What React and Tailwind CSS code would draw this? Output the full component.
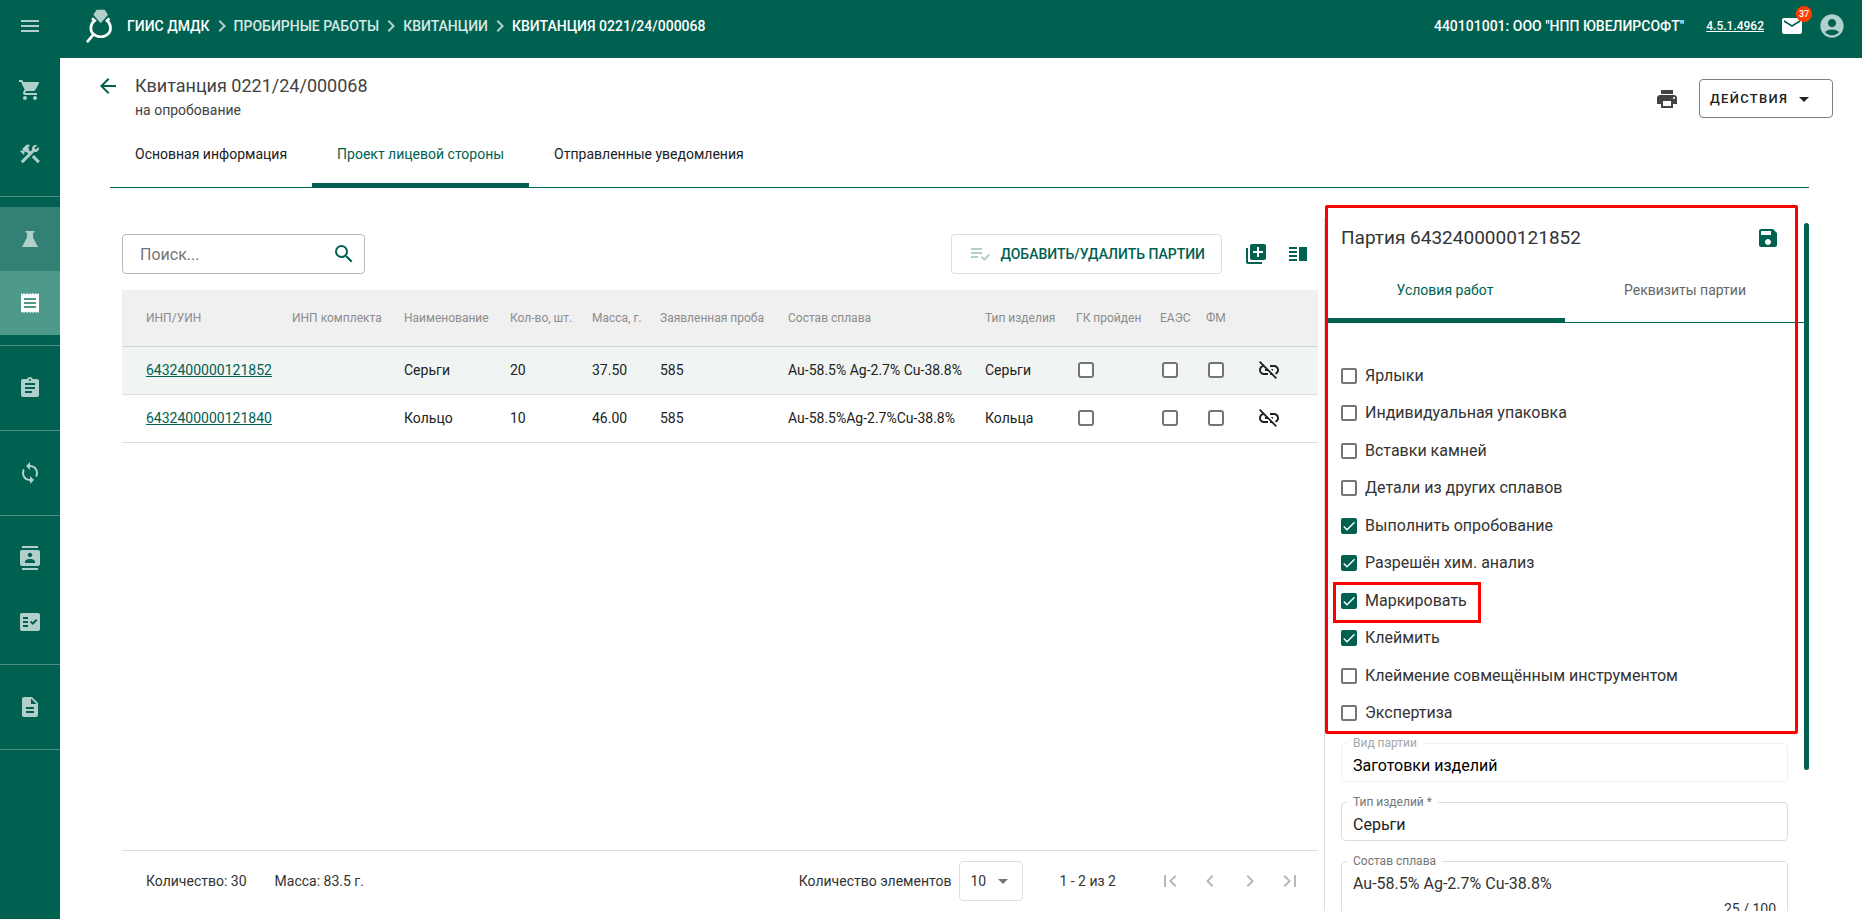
import { useState } from 'react'
import {
  MdMenu, MdShoppingCart, MdConstruction, MdReceipt, MdAssignment, MdSync, MdContacts, MdFactCheck,
  MdDescription, MdMail, MdAccountCircle, MdArrowBack, MdPrint, MdArrowDropDown, MdSearch,
  MdPlaylistAddCheck, MdLibraryAdd, MdVerticalSplit, MdLinkOff, MdSave, MdFirstPage, MdLastPage,
  MdChevronLeft, MdChevronRight, MdCheck,
} from 'react-icons/md'

const columns = [
  { title: 'ИНП/УИН', width: 'w-[170px]' },
  { title: 'ИНП комплекта', width: 'w-[112px]' },
  { title: 'Наименование', width: 'w-[106px]' },
  { title: 'Кол-во, шт.', width: 'w-[82px]' },
  { title: 'Масса, г.', width: 'w-[68px]' },
  { title: 'Заявленная проба', width: 'w-[128px]' },
  { title: 'Состав сплава', width: 'w-[197px]' },
  { title: 'Тип изделия', width: 'w-[91px]' },
  { title: 'ГК пройден', width: 'w-[84px]' },
  { title: 'ЕАЭС', width: 'w-[46px]' },
  { title: 'ФМ', width: 'w-[51px]' },
]

const rows = [
  { inp: '6432400000121852', name: 'Серьги', count: 20, mass: '37.50', proba: 585, alloy: 'Au-58.5% Ag-2.7% Cu-38.8%', type: 'Серьги' },
  { inp: '6432400000121840', name: 'Кольцо', count: 10, mass: '46.00', proba: 585, alloy: 'Au-58.5%Ag-2.7%Cu-38.8%', type: 'Кольца' },
]

const conditions = [
  { label: 'Ярлыки' },
  { label: 'Индивидуальная упаковка' },
  { label: 'Вставки камней' },
  { label: 'Детали из других сплавов' },
  { label: 'Выполнить опробование', checked: true },
  { label: 'Разрешён хим. анализ', checked: true },
  { label: 'Маркировать', checked: true, marked: true },
  { label: 'Клеймить', checked: true },
  { label: 'Клеймение совмещённым инструментом' },
  { label: 'Экспертиза' },
]

function Flask({ className }) {
  return (
    <svg viewBox="0 0 24 24" fill="currentColor" className={className}>
      <path d="M7.5 4h9v1.6h-1.4v5.1L20 20H4l4.9-9.3V5.6H7.5z" />
    </svg>
  )
}

function Logo() {
  return (
    <svg viewBox="18 12 84 102" className="h-[34px] w-7" fill="none">
      <path d="M36 40l8 7C30 57 29 77 40 87c12 11 33 11 44 0 11-10 10-30-3-40l7-7" stroke="#fff" strokeWidth="8" />
      <path d="M23 109l17-20" stroke="#fff" strokeWidth="8" strokeLinecap="round" />
      <path d="M50 14h24l10 15-22 26-22-26z" fill="#b2d0cb" />
    </svg>
  )
}

function NavItem({ icon: Icon, label, className = 'text-[#b2d0cb]' }) {
  return (
    <a href="#" aria-label={label} className={`flex h-16 items-center justify-center ${className}`}>
      <Icon className="size-6" />
    </a>
  )
}

function NavDivider() {
  return <div className="my-2.5 h-px bg-[#4d9085]" />
}

function Sidebar() {
  return (
    <nav className="w-[60px] shrink-0 bg-[#006151]">
      <NavItem icon={MdShoppingCart} label="Корзина" />
      <NavItem icon={MdConstruction} label="Инструменты" />
      <NavDivider />
      <NavItem icon={Flask} label="Пробирные работы" className="bg-[#338174] text-[#b2d0cb]" />
      <NavItem icon={MdReceipt} label="Квитанции" className="bg-[#4d998a] text-white" />
      <NavDivider />
      <NavItem icon={MdAssignment} label="Заявки" />
      <NavDivider />
      <NavItem icon={MdSync} label="Обмен" />
      <NavDivider />
      <NavItem icon={MdContacts} label="Контакты" />
      <NavItem icon={MdFactCheck} label="Проверки" />
      <NavDivider />
      <NavItem icon={MdDescription} label="Документы" />
      <NavDivider />
    </nav>
  )
}

function Crumb({ children, last }) {
  return (
    <>
      <MdChevronRight className="size-6 text-[#b2d0cb]" />
      <a href="#" className={last ? 'text-white' : 'text-[#d9e8e5]'}>{children}</a>
    </>
  )
}

function Header() {
  return (
    <header className="flex h-[58px] shrink-0 items-center bg-[#006151] pr-4 pb-1.5 text-sm font-medium text-white">
      <button aria-label="Меню" className="flex w-[60px] justify-center text-[#b2d0cb]">
        <MdMenu className="size-6" />
      </button>
      <div className="mr-[13px] ml-[26px]">
        <Logo />
      </div>
      <a href="#">ГИИС ДМДК</a>
      <Crumb>ПРОБИРНЫЕ РАБОТЫ</Crumb>
      <Crumb>КВИТАНЦИИ</Crumb>
      <Crumb last>КВИТАНЦИЯ 0221/24/000068</Crumb>
      <span className="ml-auto">440101001: ООО "НПП ЮВЕЛИРСОФТ"</span>
      <a href="#" className="ml-[22px] text-xs underline">4.5.1.4962</a>
      <button aria-label="Сообщения" className="relative ml-4">
        <MdMail className="size-6" />
        <span className="absolute -top-2 -right-2 flex size-4 items-center justify-center rounded-full bg-[#ff3d00] text-[9px]">37</span>
      </button>
      <button aria-label="Профиль" className="ml-3.5 text-[#b2d0cb]">
        <MdAccountCircle className="size-7" />
      </button>
    </header>
  )
}

function Tab({ active, children }) {
  return (
    <button className={`h-[67px] border-b-4 px-[25px] pt-1 text-sm ${active ? 'border-[#006151] text-[#006151]' : 'border-transparent text-[#212121]'}`}>
      {children}
    </button>
  )
}

function CellCheckbox({ label }) {
  return (
    <input
      type="checkbox"
      aria-label={label}
      className="ml-0.5 block size-4 appearance-none rounded-[3px] border-2 border-[#757575] bg-white checked:bg-[#006151]"
    />
  )
}

function BatchTable() {
  return (
    <table className="w-full table-fixed text-left text-sm text-[#212121]">
      <thead>
        <tr className="h-14 border-b border-[#d6d6d6] bg-[#f0f0f0] text-xs whitespace-nowrap text-[#8c8c8c]">
          {columns.map(c => (
            <th key={c.title} className={`font-normal first:pl-6 ${c.width}`}>{c.title}</th>
          ))}
          <th aria-label="Отвязать" />
        </tr>
      </thead>
      <tbody>
        {rows.map(r => (
          <tr key={r.inp} className="h-12 border-b border-[#dedede] first:bg-[#f0f5f4]">
            <td className="pl-6"><a href="#" className="text-[#006151] underline">{r.inp}</a></td>
            <td />
            <td>{r.name}</td>
            <td>{r.count}</td>
            <td>{r.mass}</td>
            <td>{r.proba}</td>
            <td className="whitespace-nowrap">{r.alloy}</td>
            <td>{r.type}</td>
            <td><CellCheckbox label="ГК пройден" /></td>
            <td><CellCheckbox label="ЕАЭС" /></td>
            <td><CellCheckbox label="ФМ" /></td>
            <td>
              <button aria-label="Отвязать партию" className="block">
                <MdLinkOff className="size-6" />
              </button>
            </td>
          </tr>
        ))}
      </tbody>
    </table>
  )
}

function Pager() {
  const icons = [
    [MdFirstPage, 'Первая страница'],
    [MdChevronLeft, 'Предыдущая страница'],
    [MdChevronRight, 'Следующая страница'],
    [MdLastPage, 'Последняя страница'],
  ]
  return (
    <div className="flex items-center border-t border-[#dedede] py-2.5 pr-2 pl-6 text-sm text-[#333333]">
      <span>Количество: 30</span>
      <span className="ml-7">Масса: 83.5 г.</span>
      <label htmlFor="per-page" className="ml-auto">Количество элементов</label>
      <div className="relative ml-2">
        <select id="per-page" className="h-10 w-16 appearance-none rounded border border-[#dedede] pl-2.5">
          <option>10</option>
        </select>
        <MdArrowDropDown className="pointer-events-none absolute top-2 right-2 size-6 text-[#757575]" />
      </div>
      <span className="mr-[34px] ml-9">1 - 2 из 2</span>
      {icons.map(([Icon, label]) => (
        <button key={label} aria-label={label} className="flex w-10 justify-center text-[#b8b8b8]">
          <Icon className="size-6" />
        </button>
      ))}
    </div>
  )
}

function Condition({ item }) {
  const [checked, setChecked] = useState(!!item.checked)
  return (
    <label className="relative flex flex-1 items-center gap-2 self-start text-[#333333]">
      {item.marked && <span className="pointer-events-none absolute top-0 -right-3.5 -bottom-[3px] -left-2 border-3 border-[#ff0000]" />}
      <span className="relative">
        <input
          type="checkbox"
          checked={checked}
          onChange={e => setChecked(e.target.checked)}
          className="block size-4 appearance-none rounded-xs border-2 border-[#757575] checked:border-[#006151] checked:bg-[#006151]"
        />
        {checked && <MdCheck className="pointer-events-none absolute inset-0 size-4 text-white" />}
      </span>
      {item.label}
    </label>
  )
}

function Field({ id, label, value, disabled }) {
  return (
    <div className="relative">
      <label
        htmlFor={id}
        className={`absolute -top-2 left-1.5 bg-white px-1.5 text-xs ${disabled ? 'text-[#a6a6a6]' : 'text-[#757575]'}`}
      >
        {label}
      </label>
      <input
        id={id}
        defaultValue={value}
        disabled={disabled}
        className={`h-[39px] w-full rounded border px-[11px] pt-1.5 ${disabled ? 'border-[#f0f0f0] text-black' : 'border-[#dedede] text-[#212121]'}`}
      />
    </div>
  )
}

function BatchPanel() {
  return (
    <aside className="relative mt-[30px] mb-2 w-[485px] shrink-0">
      <div className="h-full overflow-hidden border-l border-[#dedede]">
        <div className="flex items-center justify-between pr-[29px] pl-4 pt-1.5">
          <h2 className="text-[19px] leading-7 text-[#333333]">Партия 6432400000121852</h2>
          <button aria-label="Сохранить" className="text-[#006151]">
            <MdSave className="size-6" />
          </button>
        </div>
        <div className="mt-2.5 flex h-[61px] border-b border-[#006151] pr-1 text-sm">
          <button className="-mb-px flex-1 border-b-5 border-[#006151] text-[#006151]">Условия работ</button>
          <button className="flex-1 pb-1 text-[#666666]">Реквизиты партии</button>
        </div>
        <div className="mt-[34px] flex h-[375px] flex-col pl-4">
          {conditions.map(c => <Condition key={c.label} item={c} />)}
        </div>
        <div className="mt-[11px] flex flex-col gap-5 pr-[21px] pl-4">
          <Field id="kind" label="Вид партии" value="Заготовки изделий" disabled />
          <Field id="type" label="Тип изделий *" value="Серьги" />
          <div className="relative">
            <label htmlFor="alloy" className="absolute -top-2 left-1.5 bg-white px-1.5 text-xs text-[#757575]">Состав сплава</label>
            <textarea
              id="alloy"
              defaultValue="Au-58.5% Ag-2.7% Cu-38.8%"
              className="block h-20 w-full resize-none rounded border border-[#dedede] px-[11px] pt-2.5 text-[#333333]"
            />
            <span className="absolute top-[38px] right-3 text-sm text-[#333333]">25 / 100</span>
          </div>
        </div>
      </div>
      <div className="absolute top-[5px] right-0 h-[79%] w-[5px] rounded-full bg-[#006151]" />
      <div className="pointer-events-none absolute -top-[13px] right-[11px] left-px h-[529px] rounded-xs border-3 border-[#ff0000]" />
    </aside>
  )
}

export default function App() {
  return (
    <div className="flex h-screen flex-col overflow-hidden bg-white font-[Roboto,sans-serif]">
      <Header />
      <div className="flex min-h-0 flex-1">
        <Sidebar />
        <main className="flex min-w-0 flex-1 flex-col">
          <div className="flex items-start pt-4 pr-[29px] pl-9">
            <button aria-label="Назад" className="text-[#006151]">
              <MdArrowBack className="size-6" />
            </button>
            <div className="ml-[15px] text-[#424242]">
              <h1 className="text-lg leading-6">Квитанция 0221/24/000068</h1>
              <p className="mt-0.5 text-sm">на опробование</p>
            </div>
            <button aria-label="Печать" className="mt-[13px] ml-auto text-[#424242]">
              <MdPrint className="size-6" />
            </button>
            <button className="mt-[5px] ml-5 flex h-[39px] w-[134px] items-center rounded border border-[#808080] pl-2.5 text-[13px] font-medium tracking-widest text-[#212121]">
              ДЕЙСТВИЯ
              <MdArrowDropDown className="ml-1 size-6" />
            </button>
          </div>
          <div className="mr-[53px] ml-[50px] flex border-b border-[#006151]">
            <Tab>Основная информация</Tab>
            <Tab active>Проект лицевой стороны</Tab>
            <Tab>Отправленные уведомления</Tab>
          </div>
          <div className="mr-[53px] ml-[62px] flex min-h-0 flex-1">
            <section className="mr-1.5 flex min-w-0 flex-1 flex-col pt-[46px]">
              <div className="mb-4 flex items-center">
                <div className="relative">
                  <input
                    type="search"
                    aria-label="Поиск"
                    placeholder="Поиск..."
                    className="h-10 w-[243px] rounded border border-[#b8b8b8] pr-10 pl-[17px] placeholder:text-[#757575]"
                  />
                  <MdSearch className="absolute top-2 right-[9px] size-6 text-[#006151]" />
                </div>
                <button className="ml-auto flex h-10 items-center rounded border border-[#dedede] px-4 text-sm font-medium text-[#006151]">
                  <MdPlaylistAddCheck className="mr-2 size-6 text-[#b2d0cb]" />
                  ДОБАВИТЬ/УДАЛИТЬ ПАРТИИ
                </button>
                <button aria-label="Добавить" className="ml-[22px] text-[#006151]">
                  <MdLibraryAdd className="size-6" />
                </button>
                <button aria-label="Панель" className="mr-2 ml-[18px] text-[#006151]">
                  <MdVerticalSplit className="size-6" />
                </button>
              </div>
              <BatchTable />
              <div className="mt-auto mb-2">
                <Pager />
              </div>
            </section>
            <BatchPanel />
          </div>
        </main>
      </div>
    </div>
  )
}
